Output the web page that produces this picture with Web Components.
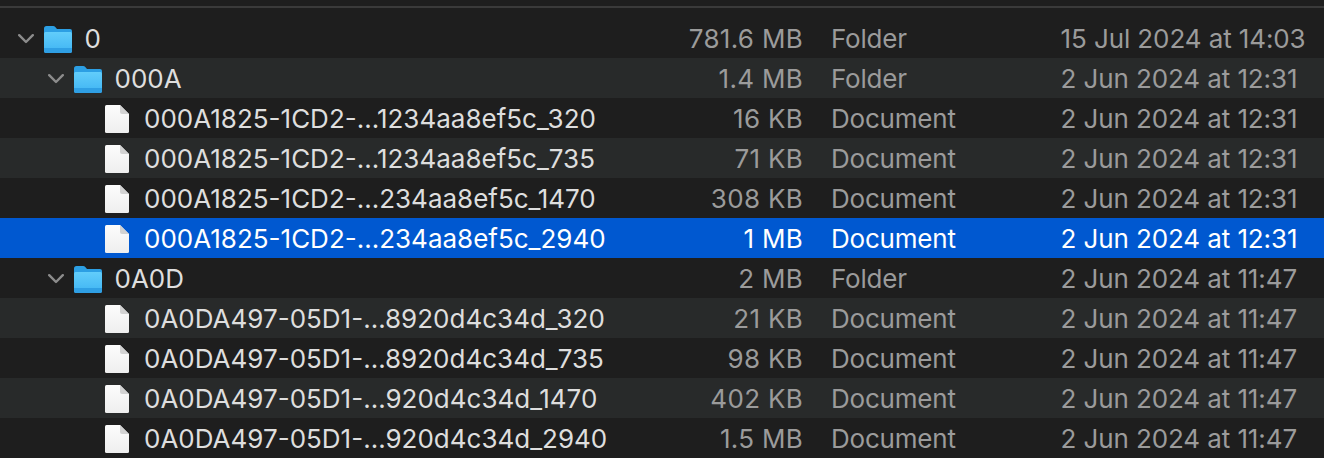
<!doctype html>
<html>
<head>
<meta charset="utf-8">
<style>
  html, body { margin: 0; background: #1e1e1e; overflow: hidden; }
  body { font-family: Inter, "Liberation Sans", sans-serif; }
</style>
</head>
<body>
<finder-list>
  <finder-row level="0" type="folder" name="0" size="781.6 MB" kind="Folder" date="15 Jul 2024 at 14:03"></finder-row>
  <finder-row level="1" type="folder" name="000A" size="1.4 MB" kind="Folder" date="2 Jun 2024 at 12:31" striped></finder-row>
  <finder-row level="2" type="doc" name="000A1825-1CD2-…1234aa8ef5c_320" size="16 KB" kind="Document" date="2 Jun 2024 at 12:31"></finder-row>
  <finder-row level="2" type="doc" name="000A1825-1CD2-…1234aa8ef5c_735" size="71 KB" kind="Document" date="2 Jun 2024 at 12:31" striped></finder-row>
  <finder-row level="2" type="doc" name="000A1825-1CD2-…234aa8ef5c_1470" size="308 KB" kind="Document" date="2 Jun 2024 at 12:31"></finder-row>
  <finder-row level="2" type="doc" name="000A1825-1CD2-…234aa8ef5c_2940" size="1 MB" kind="Document" date="2 Jun 2024 at 12:31" selected></finder-row>
  <finder-row level="1" type="folder" name="0A0D" size="2 MB" kind="Folder" date="2 Jun 2024 at 11:47"></finder-row>
  <finder-row level="2" type="doc" name="0A0DA497-05D1-…8920d4c34d_320" size="21 KB" kind="Document" date="2 Jun 2024 at 11:47" striped></finder-row>
  <finder-row level="2" type="doc" name="0A0DA497-05D1-…8920d4c34d_735" size="98 KB" kind="Document" date="2 Jun 2024 at 11:47"></finder-row>
  <finder-row level="2" type="doc" name="0A0DA497-05D1-…920d4c34d_1470" size="402 KB" kind="Document" date="2 Jun 2024 at 11:47" striped></finder-row>
  <finder-row level="2" type="doc" name="0A0DA497-05D1-…920d4c34d_2940" size="1.5 MB" kind="Document" date="2 Jun 2024 at 11:47"></finder-row>
</finder-list>
<script>
const FOLDER_ICON = `<svg width="28" height="27" viewBox="0 0 28 27">
  <defs><linearGradient id="f" x1="0" y1="0" x2="0" y2="1">
    <stop offset="0" stop-color="#62cdfb"/><stop offset="1" stop-color="#3fb4f3"/>
  </linearGradient></defs>
  <path d="M0 2.5Q0 0 2.5 0H9Q10.5 0 11.5 1.2L13 3H26Q28 3 28 5V8H0Z" fill="#2c9fe4"/>
  <path d="M0 7.5Q0 6 1.5 6H26.5Q28 6 28 7.5V25Q28 27 26 27H2Q0 27 0 25Z" fill="url(#f)"/>
  <path d="M0 22H28V25Q28 27 26 27H2Q0 27 0 25Z" fill="#2f9fe4"/>
</svg>`;

const DOC_ICON = `<svg width="24" height="28" viewBox="0 0 24 28">
  <defs><linearGradient id="d" x1="0" y1="0" x2="0" y2="1">
    <stop offset="0" stop-color="#fcfcfc"/><stop offset="1" stop-color="#eeeeee"/>
  </linearGradient></defs>
  <path d="M1.5 0H15L24 9V26.5Q24 28 22.5 28H1.5Q0 28 0 26.5V1.5Q0 0 1.5 0Z" fill="url(#d)"/>
  <path d="M15 0L24 9H17Q15 9 15 7Z" fill="#d2d2d2"/>
</svg>`;

const CHEVRON = `<svg width="16" height="10" viewBox="0 0 16 10">
  <path d="M1.2 1.2L8 8L14.8 1.2" fill="none" stroke="#8c8c8c" stroke-width="2.4" stroke-linecap="round" stroke-linejoin="round"/>
</svg>`;

class FinderList extends HTMLElement {
  constructor() {
    super();
    this.html = this.attachShadow({ mode: 'open' });
  }
  connectedCallback() {
    this.html.innerHTML = `<style>
      :host { display: block; width: 1324px; height: 458px; overflow: hidden; background: #1e1e1e; }
      .top { height: 6px; background: #1e1e1e; border-bottom: 2px solid #3a3a3a; }
      .gap { height: 10px; }
    </style>
    <div class="top"></div>
    <div class="gap"></div>
    <slot></slot>`;
  }
}

class FinderRow extends HTMLElement {
  constructor() {
    super();
    this.html = this.attachShadow({ mode: 'open' });
  }
  connectedCallback() {
    const level = Number(this.getAttribute('level'));
    const type = this.getAttribute('type');
    const icon = type === 'folder' ? FOLDER_ICON : DOC_ICON;
    const chevron = type === 'folder' ? CHEVRON : '';
    this.html.innerHTML = `<style>
      :host {
        display: grid;
        grid-template-columns: 664px 139px 229px 1fr;
        align-items: center;
        height: 40px;
        font-size: 26px;
        line-height: 42px;
        color: #9b9b9b;
        white-space: nowrap;
      }
      :host([striped]) { background: #282a2a; }
      :host([selected]) { background: #0058d0; color: #fff; }
      .name { display: flex; align-items: center; padding-left: ${18 + level * 30}px; color: #dedede; }
      :host([selected]) .name { color: #fff; }
      .chev { width: 26px; display: flex; justify-content: flex-start; flex: none; }
      .icon { width: ${type === 'folder' ? 28 : 24}px; flex: none; display: block; margin-left: ${type === 'folder' ? 0 : 1}px; margin-right: ${type === 'folder' ? 12.5 : 15}px; }
      .icon svg { display: block; }
      .size { text-align: right; letter-spacing: 0.3px; }
      .kind { padding-left: 28px; letter-spacing: -0.2px; }
      .date { padding-left: 28.5px; letter-spacing: -0.1px; }
    </style>
    <div class="name"><span class="chev">${chevron}</span><span class="icon">${icon}</span><span>${this.getAttribute('name')}</span></div>
    <div class="size">${this.getAttribute('size')}</div>
    <div class="kind">${this.getAttribute('kind')}</div>
    <div class="date">${this.getAttribute('date')}</div>`;
  }
}

customElements.define('finder-list', FinderList);
customElements.define('finder-row', FinderRow);
</script>
</body>
</html>
